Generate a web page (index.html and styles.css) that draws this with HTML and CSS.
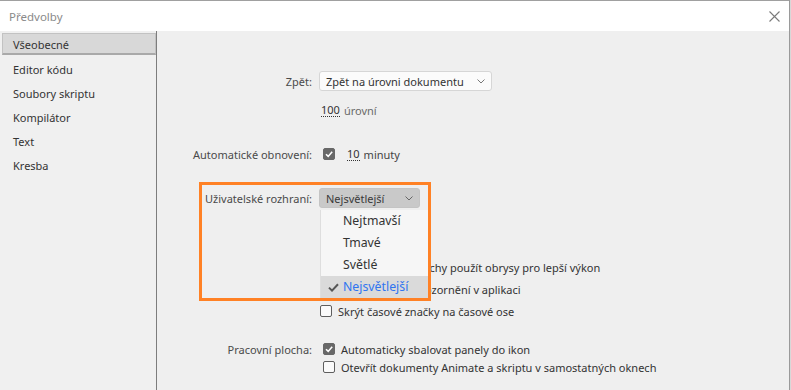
FILE: index.html
```html
<!DOCTYPE html>
<html lang="cs">
<head>
    <meta charset="UTF-8">
    <meta name="viewport" content="width=device-width, initial-scale=1.0">
    <title>Předvolby</title>
    <link rel="stylesheet" href="styles.css">
</head>
<body>

<div class="window">
    <div class="titlebar">
        <span class="title">Předvolby</span>
        <span class="close">
            <svg width="11" height="11" viewBox="0 0 11 11"><path d="M0.5 0.5 L10.5 10.5 M10.5 0.5 L0.5 10.5" stroke="#7a7a7a" stroke-width="1.1" fill="none"/></svg>
        </span>
    </div>

    <div class="content">
        <ul class="nav">
            <li class="nav-item active">Všeobecné</li>
            <li class="nav-item">Editor kódu</li>
            <li class="nav-item">Soubory skriptu</li>
            <li class="nav-item">Kompilátor</li>
            <li class="nav-item">Text</li>
            <li class="nav-item">Kresba</li>
        </ul>

        <div class="panel">
            <div class="row row-undo">
                <span class="label">Zpět:</span>
                <span class="select">
                    Zpět na úrovni dokumentu
                    <svg class="chevron" width="8" height="5" viewBox="0 0 8 5"><path d="M0.5 0.5 L4 4 L7.5 0.5" stroke="#777" fill="none"/></svg>
                </span>
            </div>
            <div class="row row-levels">
                <span class="label"></span>
                <span class="value"><span class="num">100</span> <span class="unit">úrovní</span></span>
            </div>
            <div class="row row-autosave">
                <span class="label">Automatické obnovení:</span>
                <span class="value">
                    <span class="check on"><svg width="12" height="12" viewBox="0 0 12 12"><path d="M3 6.2 L5.2 8.4 L9.2 3.8" stroke="#fff" stroke-width="1.6" fill="none"/></svg></span>
                    <span class="num num-gap">10</span> <span class="unit dark">minuty</span>
                </span>
            </div>
            <div class="row row-ui">
                <span class="label">Uživatelské rozhraní:</span>
                <span class="select select-open">
                    Nejsvětlejší
                    <svg class="chevron" width="8" height="5" viewBox="0 0 8 5"><path d="M0.5 0.5 L4 4 L7.5 0.5" stroke="#666" fill="none"/></svg>
                </span>
            </div>
            <div class="row row-opt first">
                <span class="label"></span>
                <label class="option"><span class="check"></span>Pro moc velké plochy použít obrysy pro lepší výkon</label>
            </div>
            <div class="row row-opt">
                <span class="label"></span>
                <label class="option"><span class="check"></span>Zobrazit okna upozornění v aplikaci</label>
            </div>
            <div class="row row-opt">
                <span class="label"></span>
                <label class="option"><span class="check"></span>Skrýt časové značky na časové ose</label>
            </div>
            <div class="row row-work">
                <span class="label">Pracovní plocha:</span>
                <label class="option shifted"><span class="check on"><svg width="12" height="12" viewBox="0 0 12 12"><path d="M3 6.2 L5.2 8.4 L9.2 3.8" stroke="#fff" stroke-width="1.6" fill="none"/></svg></span>Automaticky sbalovat panely do ikon</label>
            </div>
            <div class="row row-work2">
                <span class="label"></span>
                <label class="option shifted"><span class="check"></span>Otevřít dokumenty Animate a skriptu v samostatných oknech</label>
            </div>

            <!-- open dropdown of the UI theme select -->
            <ul class="popup">
                <li>Nejtmavší</li>
                <li>Tmavé</li>
                <li>Světlé</li>
                <li class="picked">
                    <svg class="tick" width="11" height="9" viewBox="0 0 11 9"><path d="M1 4.6 L4 7.6 L10 1.2" stroke="#555" stroke-width="2" fill="none"/></svg>
                    Nejsvětlejší
                </li>
            </ul>

            <div class="highlight"></div>
        </div>
    </div>
</div>

</body>
</html>
```

FILE: styles.css
```css
body {
    margin: 0;
    padding: 0;
    background: #d8d8d8;
    font-family: 'Noto Sans', sans-serif;
    font-size: 11px;
    color: #333;
}

.window {
    width: 789px;
    height: 390px;
    border-right: 1px solid #9a9a9a;
    background: #f0f0f0;
    display: flex;
    flex-direction: column;
    overflow: hidden;
}

.titlebar {
    height: 30px;
    border-top: 1px solid #a0a0a0;
    background: #fff;
    display: flex;
    align-items: center;
    justify-content: space-between;
    padding: 0 9px;
    flex-shrink: 0;
}

.title {
    color: #8a8a8a;
    font-size: 11.5px;
}

.close {
    display: flex;
}

.content {
    flex: 1;
    display: flex;
}

.nav {
    list-style: none;
    margin: 0;
    padding: 2px 0 0 2px;
    width: 154px;
    border-right: 1px solid #7d7d7d;
    background: #f0f0f0;
}

.nav-item {
    box-sizing: border-box;
    height: 22px;
    line-height: 22px;
    margin-bottom: 2px;
    padding-left: 10px;
    color: #333;
    border: 1px solid transparent;
}

.nav-item.active {
    margin-bottom: 3px;
    background: #d8d8d8;
    border-color: #c2c2c2;
    border-bottom: 2px solid #a9a9a9;
}

.panel {
    position: relative;
    flex: 1;
    background: #efefef;
}

.row {
    display: grid;
    grid-template-columns: 155px auto;
    column-gap: 8px;
    align-items: center;
    height: 18px;
}

.label {
    text-align: right;
    color: #4a4a4a;
    white-space: nowrap;
}

.select {
    display: flex;
    align-items: center;
    justify-content: space-between;
    box-sizing: border-box;
    height: 20px;
    margin-left: -1px;
    padding: 0 6px 0 6px;
    background: #fbfbfb;
    border: 1px solid #d6d6d6;
    border-radius: 3px;
    color: #333;
    white-space: nowrap;
}

.row-undo {
    height: 20px;
    margin-top: 40px;
}

.row-undo .select {
    width: 173px;
}

.row-levels {
    margin-top: 10px;
}

.value {
    display: flex;
    align-items: center;
    white-space: nowrap;
    color: #444;
}

.row-levels .value {
    margin-left: 1px;
}

.num {
    border-bottom: 1px dotted #333;
    line-height: 13px;
    color: #333;
}

.num-gap {
    margin-left: 12px;
}

.unit {
    margin-left: 4px;
    color: #6a6a6a;
}

.unit.dark {
    color: #444;
}

.row-autosave {
    margin-top: 26px;
}

.row-autosave .value {
    margin-left: 3px;
}

.check {
    display: inline-flex;
    box-sizing: border-box;
    width: 12px;
    height: 12px;
    border: 1px solid #5e5e5e;
    border-radius: 2px;
    background: #fafafa;
    flex-shrink: 0;
}

.check.on {
    background: #686868;
    border-color: #686868;
}

.check.on svg {
    margin: -1px;
}

.row-ui {
    height: 20px;
    margin-top: 25px;
}

.select-open {
    width: 101px;
    background: #c9c9c9;
    border-color: #c4c4c4;
    color: #3a3a3a;
}

.option {
    display: flex;
    align-items: center;
    gap: 6px;
    white-space: nowrap;
    color: #333;
}

.option.shifted {
    margin-left: 3px;
}

.row-opt {
    height: 22px;
}

.row-opt.first {
    margin-top: 48px;
}

.row-work {
    margin-top: 18px;
}

.popup {
    position: absolute;
    left: 163px;
    top: 179px;
    width: 110px;
    margin: 0;
    padding: 0;
    list-style: none;
    background: #f6f6f6;
    border-left: 1px solid #dedede;
    font-size: 12.3px;
    color: #333;
}

.popup li {
    position: relative;
    height: 22px;
    line-height: 22px;
    padding-left: 22px;
}

.popup li.picked {
    background: #dadada;
    color: #2f74f0;
}

.tick {
    position: absolute;
    left: 7px;
    top: 7px;
}

.highlight {
    position: absolute;
    left: 42px;
    top: 151px;
    width: 226px;
    height: 113px;
    border: 3px solid #ff8125;
}
```
